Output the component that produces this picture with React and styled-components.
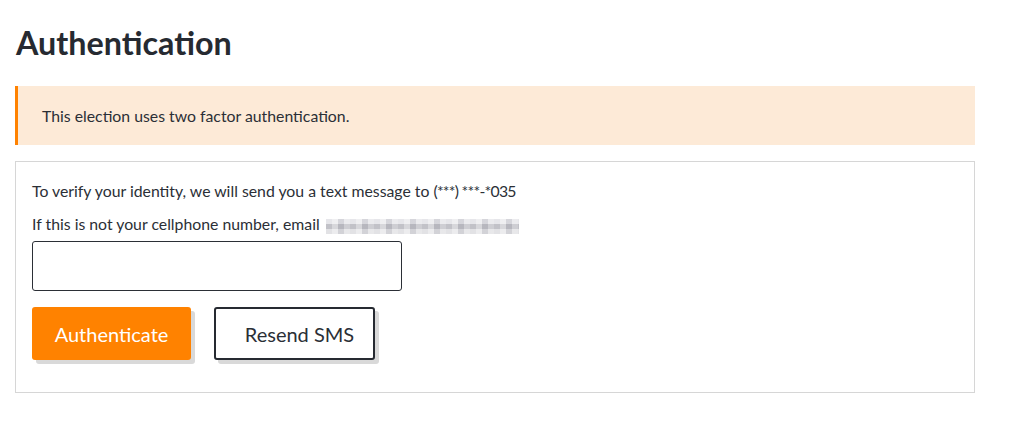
import React, {useState} from 'react';
import styled, {createGlobalStyle} from 'styled-components';

const GlobalStyle = createGlobalStyle`
    body {
        margin: 0;
        background: #ffffff;
        font-family: Lato, "Open Sans", sans-serif;
        color: #23272f;
    }
`;

const Page = styled.div`
    width: 960px;
    padding: 22px 15px 0 15px;
`;

const Title = styled.h1`
    margin: 0 0 22px 1px;
    font-size: 32.3px;
    line-height: 42px;
    font-weight: 700;
    color: #262a31;
`;

const Alert = styled.div`
    display: flex;
    align-items: center;
    height: 59px;
    padding-left: 24px;
    background: #fdead7;
    border-left: 3px solid #ff8200;
    font-size: 15.8px;
    color: #2b2f36;
`;

const Card = styled.div`
    margin-top: 16px;
    border: 1px solid #d6d6d6;
    padding: 18px 16px 32px 16px;
`;

const Line = styled.p`
    margin: 0 0 ${p => p.gap || 0}px 0;
    font-size: 15.8px;
    line-height: 22px;
    color: #2b2f36;
`;

const Masked = styled.span`
    letter-spacing: -0.75px;
`;

const Blurred = styled.span`
    display: inline-block;
    width: 193px;
    height: 15px;
    margin-left: 2px;
    vertical-align: -4px;
    background:
        repeating-linear-gradient(90deg, rgba(255,255,255,0) 0 6px, rgba(255,255,255,0.35) 6px 12px, rgba(120,120,135,0.15) 12px 18px, rgba(255,255,255,0.2) 18px 24px),
        linear-gradient(180deg, #e6e6ea 0 5px, #c2c2c8 5px 10px, #e2e2e5 10px 15px);
`;

const CodeInput = styled.input`
    display: block;
    box-sizing: border-box;
    width: 370px;
    height: 50px;
    margin-top: 6px;
    border: 1px solid #2b2f36;
    border-radius: 3px;
    font-family: inherit;
    font-size: 16px;
    padding: 0 12px;
    outline: none;
`;

const Actions = styled.div`
    display: flex;
    gap: 23px;
    margin-top: 16px;
`;

const Button = styled.button`
    box-sizing: border-box;
    height: 53px;
    width: ${p => p.width}px;
    padding: ${p => p.primary ? '0' : '0 0 0 10px'};
    font-family: inherit;
    font-size: 20px;
    border-radius: 3px;
    cursor: pointer;
    box-shadow: 4px 4px 0 #d9d9d9;
    background: ${p => p.primary ? '#ff8200' : '#ffffff'};
    color: ${p => p.primary ? '#ffffff' : '#2b2f36'};
    border: ${p => p.primary ? 'none' : '2px solid #262a31'};
`;

const App = () => {
    const [code, setCode] = useState("");

    return (
        <Page>
            <GlobalStyle />
            <Title>Authentication</Title>
            <Alert>This election uses two factor authentication.</Alert>
            <Card>
                <Line gap={11}>To verify your identity, we will send you a text message to <Masked>(***) ***-*035</Masked></Line>
                <Line>If this is not your cellphone number, email <Blurred /></Line>
                <CodeInput value={code} onChange={(e) => setCode(e.target.value)} />
                <Actions>
                    <Button primary width={159}>Authenticate</Button>
                    <Button width={161}>Resend SMS</Button>
                </Actions>
            </Card>
        </Page>
    );
}

export default App;
